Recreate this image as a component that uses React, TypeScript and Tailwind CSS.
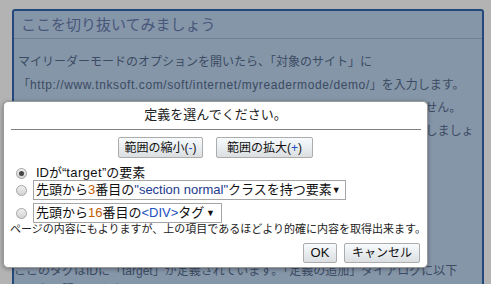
import type { ReactNode } from "react";

const Radio = ({ checked }: { checked?: boolean }) => (
  <span className="flex h-[11px] w-[11px] shrink-0 items-center justify-center rounded-full border border-[#a4a4a4] bg-gradient-to-b from-[#f0f0f0] to-[#d2d2d2]">
    {checked && <span className="h-[5px] w-[5px] rounded-full bg-[#444]" />}
  </span>
);

const FakeSelect = ({ className, children }: { className: string; children: ReactNode }) => (
  <div
    className={`ml-[6px] flex h-[20px] items-center border border-[#a5a5a5] bg-white pl-[2px] pr-[6px] text-[13px] text-[#111] ${className}`}
  >
    <span className="flex-1 whitespace-nowrap">{children}</span>
    <span className="text-[9px] leading-none">▼</span>
  </div>
);

const Btn = ({ className, children }: { className: string; children: ReactNode }) => (
  <button
    className={`flex items-center justify-center rounded-[2px] border border-[#acacac] bg-gradient-to-b from-[#f7fbfd] to-[#dcdfe2] text-[#111] ${className}`}
  >
    {children}
  </button>
);

export default function App() {
  return (
    <div className="relative h-[284px] w-[491px] overflow-hidden bg-[#b3b3b3] pl-[12px] pt-[9px] font-['Liberation_Sans','Noto_Sans_CJK_JP',sans-serif]">
      {/* page panel, dimmed behind the dialog */}
      <div className="h-[300px] w-[472px] rounded-t-[3px] border-2 border-[#23497c] bg-[#8596a9]">
        <div className="h-[28px] border-b border-[#6f8094] pl-[7px] text-[15px] leading-[27px] text-[#48567a]">
          ここを切り抜いてみましょう
        </div>
        <div className="overflow-hidden pt-[12px] text-[12px] text-[#3c4b62]">
          <div className="pl-[4px] leading-[23px] whitespace-nowrap">
            <div>マイリーダーモードのオプションを開いたら、「対象のサイト」に</div>
            <div>
              「<span className="tracking-[0.6px]">http://www.tnksoft.com/soft/internet/myreadermode/demo/</span>」を入力します。
            </div>
            <div>ただし、現時点ではまだ切り抜く部分が定義されていないので何も変わりません。</div>
            <div>そこで、実際に切り抜く部分を指定するためツールバーのボタンをクリックしましょ</div>
            <div>う。ページ内の要素をクリックすると、候補となる範囲が表示されます。</div>
            <div>範囲を確認したら、目的の要素にもっとも近いものを選択します。</div>
            <div>範囲が狭すぎる場合は「範囲の拡大」で親要素に広げることができます。</div>
            <div>逆に広すぎる場合は「範囲の縮小」を使いましょう。</div>
          </div>
          <div className="mt-[27px] leading-[19px] whitespace-nowrap">
            <div>ここのタグはIDに「target」が定義されています。「定義の追加」ダイアログに以下</div>
            <div>のように記入します。</div>
          </div>
        </div>
      </div>

      {/* dialog */}
      <div className="absolute left-[3px] top-[101px] flex h-[167px] w-[425px] flex-col rounded-[5px] border border-[#9a9a9a] bg-white shadow-[0_1px_4px_rgba(0,0,0,0.35)]">
        <div className="pt-[5px] text-center text-[13px] leading-[16px] text-[#222]">定義を選んでください。</div>
        <div className="ml-[7px] mr-[6px] mt-[6px] h-px bg-[#7f7f7f]" />
        <div className="mt-[7px] flex justify-center gap-[13px] text-[12px]">
          <Btn className="h-[21px] w-[85px]">
            範囲の縮小(<span className="text-[#1a4fc0]">-</span>)
          </Btn>
          <Btn className="h-[21px] w-[97px]">
            範囲の拡大(<span className="text-[#1a4fc0]">+</span>)
          </Btn>
        </div>

        <div className="mt-[8px] flex h-[14px] items-center pl-[12px]">
          <Radio checked />
          <span className="ml-[6px] pl-[3px] text-[13px] text-[#111]">
            IDが“<span className="tracking-[0.4px]">target</span>”の要素
          </span>
        </div>
        <div className="flex h-[20px] items-center pl-[12px]">
          <Radio />
          <FakeSelect className="w-[313px]">
            先頭から<span className="text-[#c25a00]">3</span>番目の
            <span className="text-[#1c3b8e]">"section normal"</span>クラスを持つ要素
          </FakeSelect>
        </div>
        <div className="mt-[3px] flex h-[20px] items-center pl-[12px]">
          <Radio />
          <FakeSelect className="w-[189px]">
            先頭から<span className="text-[#c25a00]">16</span>番目の
            <span className="text-[#2150c0]">&lt;DIV&gt;</span>タグ
          </FakeSelect>
        </div>

        <div className="pl-[6px] text-[11px] leading-[12px] whitespace-nowrap text-[#222]">
          ページの内容にもよりますが、上の項目であるほどより的確に内容を取得出来ます。
        </div>

        <div className="mt-[8px] flex justify-end gap-[7px] pr-[7px]">
          <Btn className="h-[20px] w-[34px] text-[13px]">OK</Btn>
          <Btn className="h-[20px] w-[76px] text-[12px]">キャンセル</Btn>
        </div>
      </div>
    </div>
  );
}
